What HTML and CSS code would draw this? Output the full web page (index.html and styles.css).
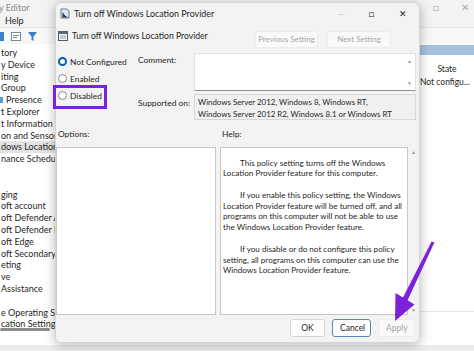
FILE: index.html
```html
<!DOCTYPE html>
<html lang="en">
<head>
  <meta charset="UTF-8" />
  <title>Turn off Windows Location Provider</title>
  <link rel="stylesheet" href="styles.css">
</head>
<body>
  <div class="app">
    <div class="app-title">
      <span class="app-name">y Editor</span>
      <span class="app-controls"><span>&#9633;</span><span>&#10005;</span></span>
    </div>
    <div class="app-menu"><span>Help</span></div>
    <div class="app-toolbar">
      <span class="tb-blue"></span>
      <svg class="tb-icon" width="10" height="9" viewBox="0 0 10 9"><rect x="0.5" y="0.5" width="9" height="8" fill="#fff" stroke="#7a8a99"/><rect x="2" y="3" width="6" height="1" fill="#6c8fb0"/><rect x="2" y="5" width="4" height="1" fill="#6c8fb0"/></svg>
      <svg class="tb-icon" width="9" height="9" viewBox="0 0 9 9"><path d="M0 0 H9 L5.5 4.5 V9 L3.5 8 V4.5 Z" fill="#3b7fc4"/></svg>
    </div>
    <div class="app-body">
      <ul class="tree">
        <li>tory</li>
        <li>y Device</li>
        <li>iting</li>
        <li>Group</li>
        <li><span class="tree-ico"></span>Presence</li>
        <li>t Explorer</li>
        <li>t Information Services</li>
        <li>on and Sensors</li>
        <li class="selected">dows Location Provider</li>
        <li>nance Scheduler</li>
        <li></li>
        <li></li>
        <li>ging</li>
        <li>oft account</li>
        <li>oft Defender Antivirus</li>
        <li>oft Defender Exploit Guard</li>
        <li>oft Edge</li>
        <li>oft Secondary Authentication Factor</li>
        <li>eting</li>
        <li>ve</li>
        <li>Assistance</li>
        <li></li>
        <li>e Operating System</li>
        <li>cation Settings</li>
      </ul>
      <div class="list">
        <div class="list-banner"></div>
        <div class="list-row list-head"><span>Setting</span><span class="col-state">State</span></div>
        <div class="list-row"><span>Turn off Windows Location Provider</span><span class="col-state">Not configu...</span></div>
        <div class="list-foot"></div>
      </div>
    </div>
    <div class="app-scroll"></div>
  </div>

  <div class="dialog">
    <div class="titlebar">
      <svg class="ico" width="10" height="11" viewBox="0 0 10 11"><path d="M1 1 H7 L9 3 V10 H1 Z" fill="#dfe8f2" stroke="#51606f" stroke-width="0.8"/><path d="M2.5 4 L5 7.5 L8 9.5 H2.5 Z" fill="#22345a"/></svg>
      <span class="titlebar-text">Turn off Windows Location Provider</span>
      <span class="win-btn min">&#8212;</span>
      <span class="win-btn">&#9633;</span>
      <span class="win-btn">&#10005;</span>
    </div>

    <div class="header">
      <svg class="ico" width="10" height="10" viewBox="0 0 10 10"><rect x="0.5" y="0.5" width="9" height="9" fill="#f4f4f4" stroke="#5a5a5a"/><rect x="0.5" y="0.5" width="9" height="2.5" fill="#5a6878"/><path d="M2 5 H8 M2 7 H8" stroke="#7d8a98" stroke-width="0.8"/></svg>
      <span class="header-text">Turn off Windows Location Provider</span>
      <span class="nav-btns">
        <button class="btn disabled">Previous Setting</button>
        <button class="btn disabled">Next Setting</button>
      </span>
    </div>

    <div class="settings">
      <div class="radios">
        <label class="radio"><span class="dot checked"></span>Not Configured</label>
        <label class="radio"><span class="dot"></span>Enabled</label>
        <label class="radio"><span class="dot"></span>Disabled</label>
      </div>
      <div class="fields">
        <span class="field-label">Comment:</span>
        <div class="comment">
          <div class="vscroll"><span>&#9650;</span><span>&#9660;</span></div>
        </div>
        <span class="field-label supported-label">Supported on:</span>
        <div class="supported">Windows Server 2012, Windows 8, Windows RT,<br>Windows Server 2012 R2, Windows 8.1 or Windows RT</div>
      </div>
    </div>

    <div class="pane-labels">
      <span class="options-label">Options:</span>
      <span>Help:</span>
    </div>

    <div class="panes">
      <div class="options"></div>
      <div class="help">
        <p>This policy setting turns off the Windows<br>Location Provider feature for this computer.</p>
        <p>If you enable this policy setting, the Windows<br>Location Provider feature will be turned off, and all<br>programs on this computer will not be able to use<br>the Windows Location Provider feature.</p>
        <p>If you disable or do not configure this policy<br>setting, all programs on this computer can use the<br>Windows Location Provider feature.</p>
      </div>
      <div class="vscroll help-scroll"><span>&#9650;</span><span>&#9660;</span></div>
    </div>

    <div class="footer">
      <button class="btn">OK</button>
      <button class="btn focused">Cancel</button>
      <button class="btn disabled">Apply</button>
    </div>
  </div>

  <div class="highlight"></div>

  <svg class="arrow" width="474" height="351" viewBox="0 0 474 351">
    <polygon points="434.4,242.6 431.6,241.4 402.2,299 407,301.4" fill="#7d22d9"/>
    <polygon points="395,321 395.5,293 414.5,304.5" fill="#7d22d9"/>
  </svg>
</body>
</html>
```

FILE: styles.css
```css
* { box-sizing: border-box; margin: 0; padding: 0; }
body {
  width: 474px;
  height: 351px;
  overflow: hidden;
  position: relative;
  background: #ececec;
  font-family: Lato, 'Noto Sans', sans-serif;
  font-size: 9px;
  color: #1f1f1f;
}

/* background editor window */
.app {
  height: 345px;
  background: #fff;
  display: flex;
  flex-direction: column;
}
.app-title {
  height: 14px;
  display: flex;
  align-items: center;
  justify-content: space-between;
  background: #f3f3f3;
  color: #8a8a8a;
}
.app-name { margin-left: -1px; }
.app-controls { display: flex; gap: 22px; padding-right: 5px; color: #aaa; font-size: 10px; }
.app-menu {
  height: 14px;
  padding-left: 5px;
  display: flex;
  align-items: center;
  background: #f3f3f3;
  border-bottom: 1px solid #e4e4e4;
}
.app-toolbar {
  height: 16px;
  display: flex;
  align-items: center;
  gap: 4px;
  background: #f7f7f7;
}
.tb-blue { width: 4px; height: 9px; background: #3d82c9; }
.tb-icon { margin-left: 3px; }
.app-body { flex: 1; display: flex; min-height: 0; }
.tree {
  list-style: none;
  width: 160px;
  padding-top: 3px;
  line-height: 11.8px;
  white-space: nowrap;
  overflow: hidden;
}
.tree li { height: 11.8px; padding-left: 1px; }
.tree li.selected { background: #e3e3e3; }
.tree-ico {
  display: inline-block;
  width: 3px;
  height: 6px;
  background: #5b9bd5;
  margin-right: 3px;
  margin-left: -1px;
}
.list { flex: 1; display: flex; flex-direction: column; }
.list-banner { height: 10px; margin-top: 1px; background: #a6c1de; }
.list-row {
  display: grid;
  grid-template-columns: 1fr 54px;
  height: 13px;
  align-items: center;
  white-space: nowrap;
  overflow: hidden;
}
.list-head { margin-top: 7px; }
.col-state { text-align: center; overflow: hidden; font-size: 8.5px; }
.list-row:nth-child(3) .col-state { text-align: left; }
.list-foot { margin-top: auto; height: 18px; border-top: 1px solid #e6e6e6; margin-bottom: 16px; }
.app-scroll {
  position: absolute;
  left: 0;
  top: 328px;
  width: 50px;
  height: 3px;
  background: #8c8c8c;
  border-radius: 2px;
}

/* dialog */
.dialog {
  position: absolute;
  left: 55px;
  top: 2px;
  width: 365px;
  height: 341px;
  background: #f3f3f3;
  border: 1px solid #d4d4d4;
  border-radius: 6px;
  box-shadow: 0 2px 12px rgba(0, 0, 0, 0.28);
  display: flex;
  flex-direction: column;
}
.titlebar {
  height: 20px;
  display: flex;
  align-items: center;
  padding-left: 4px;
  padding-right: 1px;
}
.titlebar-text { margin-left: 4px; flex: 1; font-size: 8.9px; }
.win-btn { width: 31px; text-align: center; font-size: 9px; color: #222; }
.win-btn.min { color: #c8c8c8; }
.header {
  height: 26px;
  display: flex;
  align-items: center;
  padding-left: 2px;
  padding-right: 28px;
}
.header-text { margin-left: 4px; flex: 1; font-size: 8.6px; }
.nav-btns { display: flex; gap: 9px; margin-top: 6px; }
.btn {
  font-family: inherit;
  font-size: 8.5px;
  height: 17px;
  padding: 0 7px;
  background: #fdfdfd;
  border: 1px solid #d6d6d6;
  border-radius: 3px;
  color: #1f1f1f;
  white-space: nowrap;
}
.btn.disabled { color: #a7a7a7; border-color: #ececec; background: #f9f9f9; }
.nav-btns .btn { width: 63px; padding: 0; font-size: 8px; }
.nav-btns .btn + .btn { width: 64px; }

.settings { display: flex; padding-top: 4px; height: 77px; }
.radios {
  width: 82px;
  padding-left: 2px;
  display: flex;
  flex-direction: column;
}
.radio { height: 17px; display: flex; align-items: center; font-size: 8.4px; white-space: nowrap; }
.dot {
  width: 9px;
  height: 9px;
  border-radius: 50%;
  border: 1px solid #8a8a8a;
  background: #fff;
  margin-right: 3px;
}
.dot.checked { border: 2.5px solid #005fb8; background: #fff; }
.fields {
  display: grid;
  grid-template-columns: 56px 222px;
  grid-template-rows: 38px 26px;
  row-gap: 3px;
  font-size: 8.4px;
}
.field-label { align-self: start; padding-top: 2px; white-space: nowrap; }
.supported-label { padding-top: 4px; }
.comment {
  background: #fff;
  border: 1px solid #e2e2e2;
  border-bottom-color: #8e8e8e;
  display: flex;
  justify-content: flex-end;
}
.vscroll {
  width: 11px;
  display: flex;
  flex-direction: column;
  justify-content: space-between;
  align-items: center;
  font-size: 5px;
  color: #9a9a9a;
  padding: 4px 0;
}
.supported {
  background: #f0f0f0;
  border: 1px solid #d8d8d8;
  padding: 1px 3px;
  line-height: 12px;
  font-size: 7.9px;
  white-space: nowrap;
}

.pane-labels {
  height: 21px;
  display: flex;
  align-items: flex-start;
  padding-left: 2px;
  padding-top: 3px;
  font-size: 8.4px;
}
.options-label { width: 164px; }

.panes { display: flex; height: 168px; }
.options {
  width: 160px;
  background: #fff;
  border: 1px solid #c6c6c6;
}
.help {
  width: 188px;
  margin-left: 4px;
  background: #fff;
  border: 1px solid #c6c6c6;
  padding: 9.5px 2px 0 2px;
  font-size: 8.1px;
  line-height: 10.8px;
  white-space: nowrap;
  overflow: hidden;
}
.help p { text-indent: 17px; margin-bottom: 10.8px; }
.help-scroll { padding: 2px 0; }

.footer {
  flex: 1;
  display: flex;
  justify-content: flex-end;
  align-items: center;
  gap: 7px;
  padding-right: 4px;
  padding-bottom: 2px;
}
.footer .btn { height: 18px; }
.footer .btn:first-child { width: 35px; }
.footer .btn:nth-child(2) { width: 39px; }
.footer .btn:nth-child(3) { width: 37px; }
.btn.focused { border-color: #5b87b8; }

/* annotations */
.highlight {
  position: absolute;
  left: 53px;
  top: 85px;
  width: 54px;
  height: 24px;
  border: 3px solid #7b23d6;
}
.arrow { position: absolute; left: 0; top: 0; }
```
